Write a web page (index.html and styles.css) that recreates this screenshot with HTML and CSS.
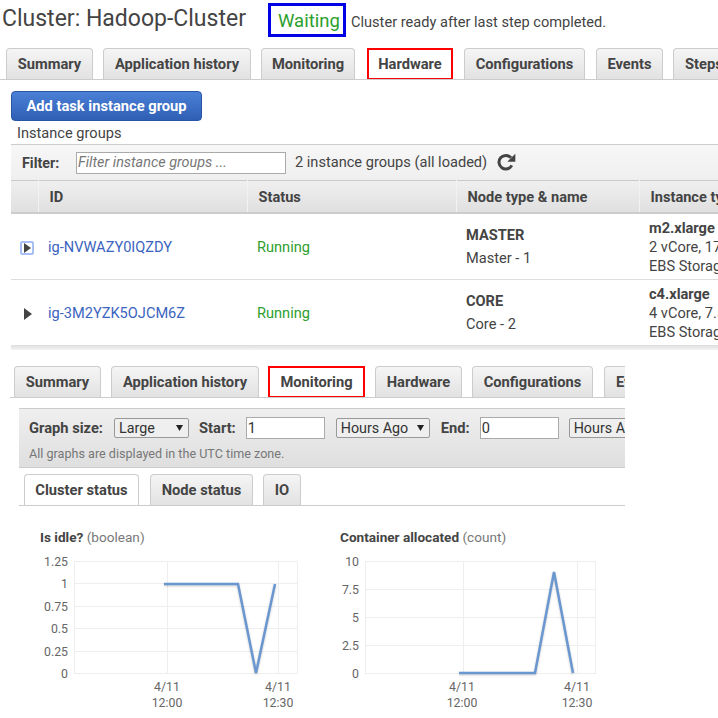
FILE: index.html
```html
<!DOCTYPE html>
<html lang="en">
<head>
  <meta charset="UTF-8">
  <title>Cluster: Hadoop-Cluster</title>
  <link rel="stylesheet" href="styles.css">
</head>
<body>

  <!-- Cluster header -->
  <div class="cluster-head">
    <h1>Cluster: Hadoop-Cluster</h1>
    <span class="state-box">Waiting</span>
    <span class="state-note">Cluster ready after last step completed.</span>
  </div>

  <div class="tabs tabs-main">
    <a class="tab tab-summary">Summary</a>
    <a class="tab tab-history">Application history</a>
    <a class="tab tab-monitoring">Monitoring</a>
    <a class="tab tab-hardware marked">Hardware</a>
    <a class="tab tab-config">Configurations</a>
    <a class="tab tab-events">Events</a>
    <a class="tab tab-steps">Steps</a>
  </div>

  <!-- Hardware panel -->
  <div class="hardware">
    <button class="btn-add">Add task instance group</button>
    <div class="group-title">Instance groups</div>
    <div class="filter-bar">
      <label class="filter-label">Filter:</label>
      <input class="filter-input" type="text" placeholder="Filter instance groups ...">
      <span class="filter-count">2 instance groups (all loaded)</span>
      <svg class="refresh" width="20" height="18" viewBox="0 0 20 18">
        <path d="M15.8 12.4A6.800 6.800 0 1 1 15 4.800" fill="none" stroke="#444" stroke-width="3"/>
        <path d="M19.300 0.800V8.800H11.300Z" fill="#444"/>
      </svg>
    </div>
    <table class="groups">
      <thead>
        <tr>
          <th class="col-arrow"></th>
          <th class="col-id">ID</th>
          <th class="col-status">Status</th>
          <th class="col-node">Node type &amp; name</th>
          <th class="col-type">Instance type</th>
        </tr>
      </thead>
      <tbody>
        <tr>
          <td class="col-arrow"><span class="arrow-focus"><span class="arrow"></span></span></td>
          <td class="col-id"><a class="group-link">ig-NVWAZY0IQZDY</a></td>
          <td class="running">Running</td>
          <td class="node-cell"><strong>MASTER</strong><span>Master - 1</span></td>
          <td class="type-cell"><strong>m2.xlarge</strong><span>2 vCore, 17.1 GiB memory</span><span>EBS Storage: 32 GiB</span></td>
        </tr>
        <tr>
          <td class="col-arrow"><span class="arrow"></span></td>
          <td class="col-id"><a class="group-link">ig-3M2YZK5OJCM6Z</a></td>
          <td class="running">Running</td>
          <td class="node-cell"><strong>CORE</strong><span>Core - 2</span></td>
          <td class="type-cell"><strong>c4.xlarge</strong><span>4 vCore, 7.5 GiB memory</span><span>EBS Storage: 32 GiB</span></td>
        </tr>
      </tbody>
    </table>
    <div class="table-foot"></div>
  </div>

  <!-- Monitoring panel -->
  <div class="monitoring">
    <div class="tabs tabs-second">
      <a class="tab tab-summary2">Summary</a>
      <a class="tab tab-history2">Application history</a>
      <a class="tab tab-monitoring2 marked">Monitoring</a>
      <a class="tab tab-hardware2">Hardware</a>
      <a class="tab tab-config2">Configurations</a>
      <a class="tab tab-events2">Events</a>
    </div>

    <div class="graph-bar">
      <div class="graph-controls">
        <label class="ctl-label">Graph size:</label>
        <select class="ctl-size"><option>Large</option></select>
        <label class="ctl-label">Start:</label>
        <input class="ctl-num" type="text" value="1">
        <select class="ctl-unit"><option>Hours Ago</option></select>
        <label class="ctl-label">End:</label>
        <input class="ctl-num ctl-end" type="text" value="0">
        <select class="ctl-unit"><option>Hours Ago</option></select>
      </div>
      <p class="utc-note">All graphs are displayed in the UTC time zone.</p>
    </div>

    <div class="tabs tabs-sub">
      <a class="tab tab-sub-cluster active">Cluster status</a>
      <a class="tab tab-sub-node">Node status</a>
      <a class="tab tab-sub-io">IO</a>
    </div>

    <div class="charts">
      <div class="chart chart-idle">
        <div class="chart-title"><b>Is idle?</b> (boolean)</div>
        <svg width="290" height="168" viewBox="0 0 290 168">
          <g class="grid">
            <path d="M34 9.500H257M34 31.500H257M34 54.500H257M34 76.500H257M34 99.500H257M34 121.500H257M34.500 9.500V121.500M127.500 9.500V121.500M238.500 9.500V121.500M257.500 9.500V121.500"/>
          </g>
          <polyline class="line" points="124,32 198,32 216,121 235,32"/>
          <g class="ticks" text-anchor="end">
            <text x="28" y="14">1.25</text>
            <text x="28" y="36">1</text>
            <text x="28" y="59">0.75</text>
            <text x="28" y="81">0.5</text>
            <text x="28" y="104">0.25</text>
            <text x="28" y="126">0</text>
          </g>
          <g class="ticks" text-anchor="middle">
            <text x="127" y="139">4/11</text>
            <text x="127" y="155">12:00</text>
            <text x="238" y="139">4/11</text>
            <text x="238" y="155">12:30</text>
          </g>
        </svg>
      </div>
      <div class="chart chart-container">
        <div class="chart-title"><b>Container allocated</b> (count)</div>
        <svg width="290" height="168" viewBox="0 0 290 168">
          <g class="grid">
            <path d="M25 9.500H256M25 37.500H256M25 65.500H256M25 93.500H256M25 121.500H256M25.500 9.500V121.500M123.500 9.500V121.500M237.500 9.500V121.500M255.500 9.500V121.500"/>
          </g>
          <polyline class="line" points="119,121 195,121 214,20 233,121"/>
          <g class="ticks" text-anchor="end">
            <text x="19" y="14">10</text>
            <text x="19" y="42">7.5</text>
            <text x="19" y="70">5</text>
            <text x="19" y="98">2.5</text>
            <text x="19" y="126">0</text>
          </g>
          <g class="ticks" text-anchor="middle">
            <text x="122" y="139">4/11</text>
            <text x="122" y="155">12:00</text>
            <text x="237" y="139">4/11</text>
            <text x="237" y="155">12:30</text>
          </g>
        </svg>
      </div>
    </div>
  </div>

</body>
</html>
```

FILE: styles.css
```css
html, body {
  margin: 0;
  height: 718px;
  overflow: hidden;
  background: #fff;
}

body {
  font-family: Roboto, Arial, sans-serif;
  font-size: 14px;
  color: #444;
  width: 718px;
}

/* header */
.cluster-head {
  display: flex;
  align-items: flex-start;
  box-sizing: border-box;
  height: 40px;
  padding: 3px 0 0 2px;
}

h1 {
  font-size: 23px;
  font-weight: 400;
  line-height: 32px;
  margin: 0;
  width: 266px;
  color: #444;
}

.state-box {
  box-sizing: border-box;
  width: 78px;
  height: 34px;
  border: 3px solid #0000e6;
  font-size: 18.500px;
  line-height: 31px;
  padding-left: 7px;
  color: #2ca02c;
}

.state-note {
  font-size: 14.600px;
  line-height: 38px;
  margin-left: 5px;
}

/* tabs */
.tabs {
  display: flex;
  box-sizing: border-box;
  height: 32px;
  border-bottom: 1px solid #ccc;
  overflow: hidden;
}

.tab {
  box-sizing: border-box;
  height: 32px;
  flex: none;
  font-weight: 700;
  font-size: 14.700px;
  line-height: 31px;
  text-align: center;
  border: 1px solid #ccc;
  border-bottom: none;
  border-radius: 4px 4px 0 0;
  background: linear-gradient(#f5f5f5, #e1e1e1);
}

.tab.marked {
  background: #fff;
  border: 2px solid #f00;
  border-radius: 0;
  line-height: 29px;
}

.tab.active {
  background: #fff;
}

.tabs-main {
  margin-top: 8px;
  padding-left: 6px;
}

.tab-summary { width: 87px; margin-right: 10px; }
.tab-history { width: 148px; margin-right: 10px; }
.tab-monitoring { width: 94px; margin-right: 12px; }
.tab-hardware { width: 86px; margin-right: 11px; }
.tab-config { width: 121px; margin-right: 11px; }
.tab-events { width: 67px; margin-right: 10px; }
.tab-steps { width: 70px; text-align: left; padding-left: 11px; }

/* hardware panel */
.hardware {
  padding-left: 11px;
}

.btn-add {
  display: block;
  box-sizing: border-box;
  width: 191px;
  height: 30px;
  margin: 11px 0 0;
  padding: 0;
  font-family: Roboto, Arial, sans-serif;
  font-weight: 700;
  font-size: 14.700px;
  color: #fff;
  background: linear-gradient(#4a80d6, #2f5fb5);
  border: 1px solid #2a55a5;
  border-radius: 4px;
}

.group-title {
  font-size: 14.600px;
  line-height: 17px;
  margin: 4px 0 0 6px;
}

.filter-bar {
  display: flex;
  align-items: center;
  box-sizing: border-box;
  height: 36px;
  margin-top: 2px;
  padding-left: 11px;
  border-top: 1px solid #ccc;
  background: linear-gradient(#f7f7f7, #efefef);
}

.filter-label {
  font-weight: 700;
  font-size: 14.300px;
  width: 54px;
}

.filter-input {
  box-sizing: border-box;
  width: 210px;
  height: 22px;
  padding: 0 1px;
  font-family: Roboto, Arial, sans-serif;
  font-size: 14.400px;
  border: 1px solid #aaa;
  background: #fff;
}

.filter-input::placeholder {
  font-style: italic;
  color: #777;
}

.filter-count {
  font-size: 14.600px;
  margin: 0 0 2px 9px;
}

.refresh {
  margin: 0 0 2px 9px;
}

.groups {
  border-collapse: collapse;
  table-layout: fixed;
  width: 900px;
}

.groups th {
  box-sizing: border-box;
  height: 33px;
  padding: 2px 0 0 11px;
  text-align: left;
  font-size: 14.600px;
  font-weight: 700;
  background: linear-gradient(#f0f0f0, #e0e0e0);
  box-shadow: inset 0 1px 0 #ccc;
  border-bottom: 2px solid #ccc;
  border-left: 1px solid #f2f2f2;
}

.groups th:first-child {
  border-left: none;
}

.col-arrow { width: 27px; }
.col-id { width: 209px; }
.col-status { width: 209px; }
.col-node { width: 183px; }
.col-type { width: 272px; }

.groups td {
  height: 65px;
  padding: 0 0 0 10px;
  font-size: 14.600px;
  border-bottom: 1px solid #ddd;
  white-space: nowrap;
  overflow: hidden;
}

.groups td.col-arrow {
  padding: 0 0 0 9px;
}

.groups td.type-cell {
  height: 63px;
  padding-top: 2px;
}

.groups tbody tr:last-child td {
  border-bottom: none;
}

.arrow {
  display: inline-block;
  width: 0;
  height: 0;
  border-left: 8px solid #444;
  border-top: 6px solid transparent;
  border-bottom: 6px solid transparent;
  vertical-align: middle;
  margin-left: 4px;
}

.arrow-focus {
  display: inline-block;
  box-sizing: border-box;
  width: 14px;
  height: 14px;
  border: 2px solid #a8c0f5;
  border-radius: 2px;
  line-height: 9px;
  vertical-align: middle;
}

.arrow-focus .arrow {
  margin-left: 2px;
  vertical-align: top;
  border-left-width: 7px;
  border-top-width: 5px;
  border-bottom-width: 5px;
}

.group-link {
  color: #3b64bf;
}

.running {
  color: #2e9e2e;
}

.node-cell strong,
.node-cell span,
.type-cell strong,
.type-cell span {
  display: block;
}

.node-cell strong,
.node-cell span {
  line-height: 23px;
}

.type-cell {
  line-height: 19px;
}

.table-foot {
  height: 5px;
  background: linear-gradient(#ddd, #f4f4f4);
}

/* monitoring panel */
.monitoring {
  width: 625px;
  margin-top: 16px;
  overflow: hidden;
}

.tabs-second {
  margin-left: 10px;
  padding-left: 4px;
}

.tab-summary2 { width: 87px; margin-right: 10px; }
.tab-history2 { width: 148px; margin-right: 9px; }
.tab-monitoring2 { width: 97px; margin-right: 10px; }
.tab-hardware2 { width: 87px; margin-right: 10px; }
.tab-config2 { width: 121px; margin-right: 11px; }
.tab-events2 { width: 67px; text-align: left; padding-left: 11px; }

.graph-bar {
  box-sizing: border-box;
  height: 60px;
  margin: 10px 0 0 19px;
  padding: 8px 0 0 10px;
  border-top: 1px solid #ccc;
  border-bottom: 1px solid #ccc;
  background: linear-gradient(#efefef, #dfdfdf);
  overflow: hidden;
}

.graph-controls {
  display: flex;
  align-items: center;
  height: 22px;
  width: 700px;
}

.ctl-label {
  font-weight: 700;
  font-size: 14.700px;
}

.graph-controls select {
  appearance: none;
  box-sizing: border-box;
  height: 20px;
  padding: 0 0 0 4px;
  font-family: Roboto, Arial, sans-serif;
  font-size: 14.300px;
  color: #333;
  border: 1px solid #999;
  border-radius: 2px;
  background: #efefef url("data:image/svg+xml,%3Csvg xmlns='http://www.w3.org/2000/svg' width='7' height='6'%3E%3Cpath d='M0 0H7L3.500 6Z' fill='%23222'/%3E%3C/svg%3E") no-repeat right 5px center;
}

.ctl-size { width: 75px; margin: 0 10px 0 11px; }
.ctl-unit { width: 94px; margin: 0 11px 0 10px; }

.ctl-num {
  box-sizing: border-box;
  width: 79px;
  height: 22px;
  margin-left: 10px;
  margin-right: 1px;
  padding: 0 1px;
  font-family: Roboto, Arial, sans-serif;
  font-size: 14.600px;
  color: #333;
  border: 1px solid #aaa;
  background: #fff;
}

.ctl-end {
  margin-right: 0;
}

.utc-note {
  margin: 7px 0 0;
  font-size: 12.600px;
  color: #777;
}

.tabs-sub {
  margin: 6px 0 0 19px;
  padding-left: 5px;
  height: 32px;
}

.tab-sub-cluster { width: 115px; margin-right: 11px; }
.tab-sub-node { width: 103px; margin-right: 10px; }
.tab-sub-io { width: 38px; }

/* graphs */
.charts {
  display: flex;
}

.chart {
  flex: none;
  width: 290px;
}

.chart-idle {
  margin: 0 10px 0 40px;
}

.chart-title {
  margin-top: 23px;
  font-size: 13.600px;
  line-height: 16px;
  color: #777;
}

.chart-title b {
  color: #444;
}

.chart svg {
  display: block;
  margin-top: 7px;
}

.grid path {
  fill: none;
  stroke: #eee;
  stroke-width: 1;
}

.line {
  fill: none;
  stroke: #6a97d0;
  stroke-width: 2.500;
  filter: drop-shadow(0 1px 1px rgba(0, 0, 0, .2));
}

.ticks text {
  font-family: Roboto, Arial, sans-serif;
  font-size: 12.300px;
  fill: #666;
}
```
